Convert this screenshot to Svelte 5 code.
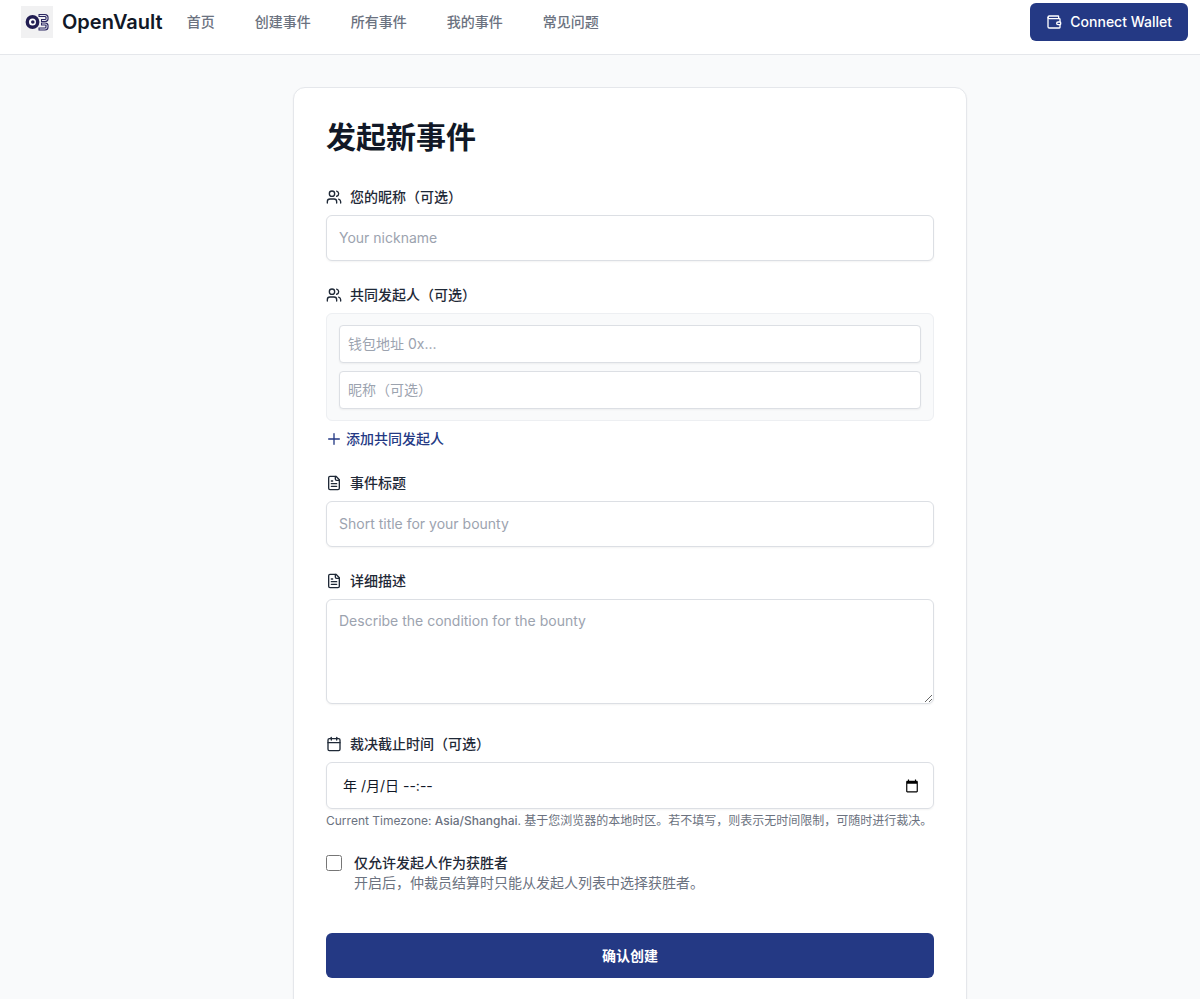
<script lang="ts">
	let nickname = $state('');
	let title = $state('');
	let description = $state('');
	let deadline = $state('');
	let initiatorsOnly = $state(false);
	let initiators = $state([{ address: '', nickname: '' }]);

	const timezone = 'Asia/Shanghai';

	const links = [
		{ href: '#home', label: '首页' },
		{ href: '#create', label: '创建事件' },
		{ href: '#events', label: '所有事件' },
		{ href: '#mine', label: '我的事件' },
		{ href: '#faq', label: '常见问题' }
	];

	function addInitiator() {
		initiators.push({ address: '', nickname: '' });
	}
</script>

{#snippet usersIcon()}
	<svg class="icon" viewBox="0 0 24 24" aria-hidden="true">
		<path d="M16 21v-2a4 4 0 0 0-4-4H6a4 4 0 0 0-4 4v2" />
		<circle cx="9" cy="7" r="4" />
		<path d="M22 21v-2a4 4 0 0 0-3-3.87" />
		<path d="M16 3.13a4 4 0 0 1 0 7.75" />
	</svg>
{/snippet}

{#snippet fileIcon()}
	<svg class="icon" viewBox="0 0 24 24" aria-hidden="true">
		<path d="M15 2H6a2 2 0 0 0-2 2v16a2 2 0 0 0 2 2h12a2 2 0 0 0 2-2V7Z" />
		<path d="M14 2v4a2 2 0 0 0 2 2h4" />
		<path d="M10 9H8" />
		<path d="M16 13H8" />
		<path d="M16 17H8" />
	</svg>
{/snippet}

<header>
	<a href="#home" class="brand">
		<svg class="logo" viewBox="0 0 32 32" aria-hidden="true">
			<rect width="32" height="32" fill="#f1f1f2" />
			<g fill="none" stroke-linejoin="round">
				<path d="M17.5 9.5H24q2 0 2 2V13q0 1.5-2 1.5h-4" stroke="#2b2760" stroke-width="3.2" />
				<path d="M20 18h4q2 0 2 1.500V21q0 2-2 2h-6.500" stroke="#2b2760" stroke-width="3.2" />
				<path d="M18.5 9.5H24q2 0 2 2V13q0 1.5-2 1.5h-3" stroke="#e4e4ee" />
				<path d="M21 18h3q2 0 2 1.500V21q0 2-2 2h-5.500" stroke="#e4e4ee" />
			</g>
			<circle cx="11.5" cy="16" r="5.2" fill="#fff" stroke="#211d52" stroke-width="3.4" />
			<circle cx="11.8" cy="16" r="1.8" fill="#211d52" />
		</svg>
		<span>OpenVault</span>
	</a>
	<nav>
		{#each links as link}
			<a href={link.href}>{link.label}</a>
		{/each}
	</nav>
	<button type="button" class="btn-wallet">
		<svg class="icon" viewBox="0 0 24 24" aria-hidden="true">
			<path d="M19 7V4a1 1 0 0 0-1-1H5a2 2 0 0 0 0 4h15a1 1 0 0 1 1 1v4h-3a2 2 0 0 0 0 4h3a1 1 0 0 0 1-1v-2a1 1 0 0 0-1-1" />
			<path d="M3 5v14a2 2 0 0 0 2 2h15a1 1 0 0 0 1-1v-4" />
		</svg>
		Connect Wallet
	</button>
</header>

<main>
	<div class="card">
		<h1>发起新事件</h1>

		<form onsubmit={(e) => e.preventDefault()}>
			<div class="field">
				<label for="nickname">{@render usersIcon()}您的昵称（可选）</label>
				<input id="nickname" type="text" placeholder="Your nickname" bind:value={nickname} />
			</div>

			<fieldset class="field">
				<legend>{@render usersIcon()}共同发起人（可选）</legend>
				{#each initiators as initiator}
					<div class="initiator">
						<input
							type="text"
							aria-label="钱包地址"
							placeholder="钱包地址 0x..."
							bind:value={initiator.address}
						/>
						<input
							type="text"
							aria-label="昵称"
							placeholder="昵称（可选）"
							bind:value={initiator.nickname}
						/>
					</div>
				{/each}
				<button type="button" class="btn-add" onclick={addInitiator}>
					<svg class="icon" viewBox="0 0 24 24" aria-hidden="true">
						<path d="M4 12h16" />
						<path d="M12 4v16" />
					</svg>
					添加共同发起人
				</button>
			</fieldset>

			<div class="field">
				<label for="title">{@render fileIcon()}事件标题</label>
				<input id="title" type="text" placeholder="Short title for your bounty" bind:value={title} />
			</div>

			<div class="field description">
				<label for="description">{@render fileIcon()}详细描述</label>
				<textarea
					id="description"
					placeholder="Describe the condition for the bounty"
					bind:value={description}
				></textarea>
			</div>

			<div class="field">
				<label for="deadline">
					<svg class="icon" viewBox="0 0 24 24" aria-hidden="true">
						<path d="M8 2v4" />
						<path d="M16 2v4" />
						<rect width="18" height="18" x="3" y="4" rx="2" />
						<path d="M3 10h18" />
					</svg>
					裁决截止时间（可选）
				</label>
				<div class="date-box">
					<input id="deadline" type="text" placeholder="年 /月/日 --:--" bind:value={deadline} />
					<button type="button" aria-label="选择日期">
						<svg viewBox="0 0 24 24" aria-hidden="true">
							<path
								d="M20 3h-1V1h-2v2H7V1H5v2H4c-1.100 0-2 .9-2 2v16c0 1.100.9 2 2 2h16c1.100 0 2-.9 2-2V5c0-1.100-.9-2-2-2zm0 18H4V8h16v13z"
							/>
						</svg>
					</button>
				</div>
				<p class="hint">
					Current Timezone: <strong>{timezone}</strong>. 基于您浏览器的本地时区。若不填写，则表示无时间限制，可随时进行裁决。
				</p>
			</div>

			<div class="check">
				<input id="initiators-only" type="checkbox" bind:checked={initiatorsOnly} />
				<div>
					<label for="initiators-only">仅允许发起人作为获胜者</label>
					<p>开启后，仲裁员结算时只能从发起人列表中选择获胜者。</p>
				</div>
			</div>

			<button type="submit" class="btn-submit">确认创建</button>
		</form>
	</div>
</main>

<style>
	:global(body) {
		background: #f9fafb;
		color: #111827;
		font-family: Inter, 'Noto Sans CJK SC', sans-serif;
		font-size: 14px;
		line-height: 20px;
	}
	header {
		display: flex;
		align-items: center;
		padding: 3px 12px 13px 21px;
		background: #fff;
		border-bottom: 1px solid #e5e7eb;
	}
	.brand {
		display: flex;
		align-items: center;
		gap: 9px;
		color: #111827;
		font-size: 20px;
		font-weight: 600;
		text-decoration: none;
	}
	.logo {
		width: 32px;
		height: 32px;
	}
	nav {
		display: flex;
		gap: 40px;
		margin-left: 24px;
	}
	nav a {
		color: #6b7280;
		font-weight: 500;
		text-decoration: none;
	}
	nav a:hover {
		color: #111827;
	}
	.icon {
		width: 16px;
		height: 16px;
		flex: none;
		fill: none;
		stroke: currentColor;
		stroke-width: 2;
		stroke-linecap: round;
		stroke-linejoin: round;
	}
	button {
		border: none;
		font: inherit;
		cursor: pointer;
	}
	.btn-wallet {
		display: flex;
		align-items: center;
		gap: 8px;
		margin-left: auto;
		padding: 9px 16px;
		background: #243984;
		color: #fff;
		border-radius: 6px;
		font-weight: 500;
	}
	main {
		padding: 32px 0 32px 60px;
	}
	.card {
		box-sizing: border-box;
		max-width: 674px;
		margin: 0 auto;
		padding: 32px;
		background: #fff;
		border: 1px solid #e5e7eb;
		border-radius: 12px;
		box-shadow: 0 1px 2px rgba(0, 0, 0, 0.05);
	}
	h1 {
		margin: 0 0 32px;
		font-size: 30px;
		font-weight: 700;
		line-height: 35px;
	}
	form {
		display: flex;
		flex-direction: column;
		gap: 24px;
	}
	.field {
		min-width: 0;
		margin: 0;
		padding: 0;
		border: none;
	}
	.field label,
	legend {
		display: flex;
		align-items: center;
		gap: 8px;
		margin-bottom: 8px;
		padding: 0;
		color: #1f2937;
		font-weight: 500;
	}
	input[type='text'],
	textarea {
		display: block;
		box-sizing: border-box;
		width: 100%;
		padding: 11px 12px 13px;
		background: #fff;
		color: #111827;
		border: 1px solid #dcdfe4;
		border-radius: 6px;
		box-shadow: 0 1px 2px rgba(0, 0, 0, 0.05);
		font: inherit;
	}
	.field > input[type='text'] {
		height: 46px;
	}
	input:focus,
	textarea:focus {
		outline: none;
		border-color: #243984;
	}
	input::placeholder,
	textarea::placeholder {
		color: #9ca3af;
		opacity: 1;
	}
	textarea {
		height: 105px;
		resize: vertical;
	}
	.description {
		margin-bottom: 6px;
	}
	.initiator {
		display: flex;
		flex-direction: column;
		gap: 8px;
		margin-bottom: 8px;
		padding: 11px 12px;
		background: #f9fafb;
		border: 1px solid #edeff2;
		border-radius: 6px;
	}
	.initiator input[type='text'] {
		height: 38px;
		padding: 7px 8px 9px;
		border-radius: 4px;
	}
	.btn-add {
		display: flex;
		align-items: center;
		gap: 4px;
		padding: 0;
		background: none;
		color: #243984;
		font-weight: 500;
	}
	.date-box {
		display: flex;
		align-items: center;
		padding: 0 14px 0 16px;
		border: 1px solid #dcdfe4;
		border-radius: 6px;
		box-shadow: 0 1px 2px rgba(0, 0, 0, 0.05);
	}
	.date-box input[type='text'] {
		height: 45px;
		padding: 0;
		border: none;
		box-shadow: none;
	}
	.date-box input::placeholder {
		color: #111827;
	}
	.date-box button {
		display: flex;
		padding: 0;
		background: none;
	}
	.date-box svg {
		width: 14px;
		height: 14px;
	}
	p {
		margin: 0;
		color: #6b7280;
	}
	.hint {
		margin-top: 4px;
		font-size: 12px;
		line-height: 16px;
	}
	.hint strong {
		font-weight: 500;
	}
	.check {
		display: flex;
		gap: 12px;
		margin-bottom: 16px;
	}
	.check input {
		width: 16px;
		height: 16px;
		margin: 2px 0;
		flex: none;
	}
	.check label {
		display: block;
		color: #1f2937;
		font-weight: 500;
	}
	.btn-submit {
		height: 45px;
		background: #243984;
		color: #fff;
		border-radius: 6px;
		font-weight: 600;
	}
</style>
